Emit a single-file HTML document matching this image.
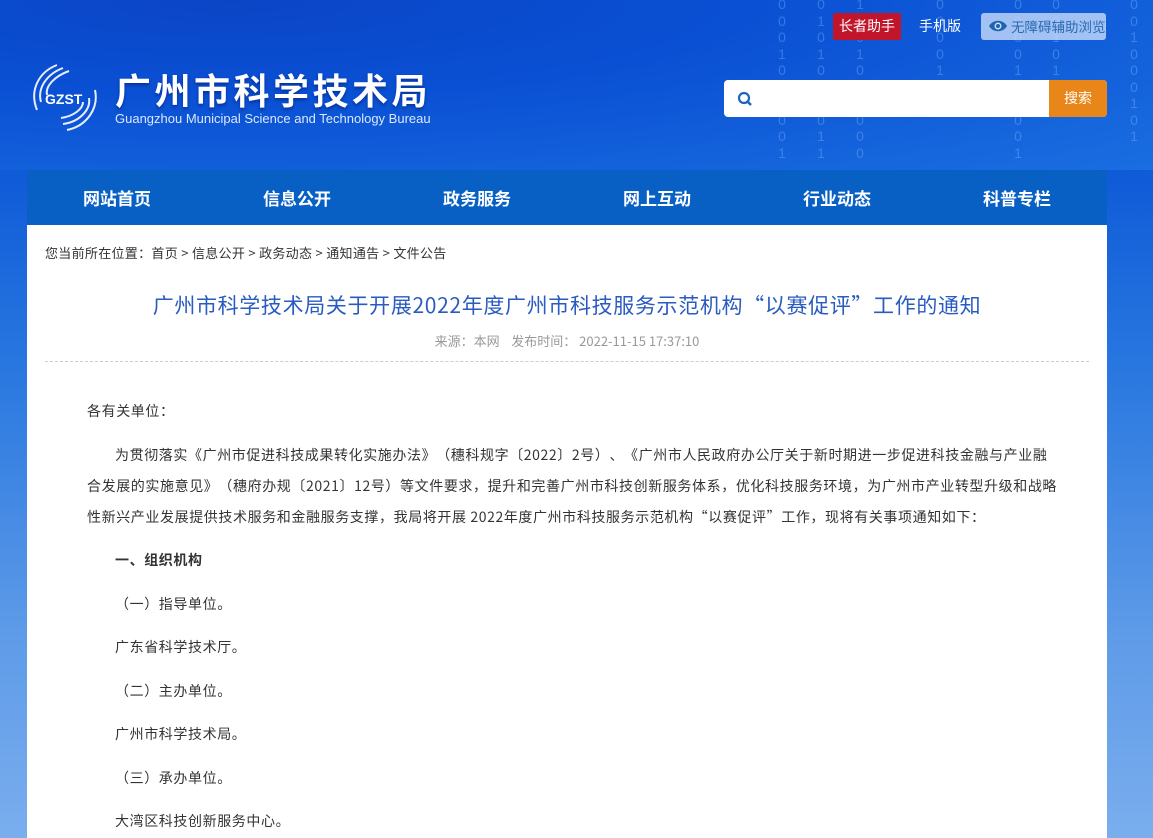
<!DOCTYPE html>
<html><head><meta charset="utf-8"><style>
*{margin:0;padding:0;box-sizing:border-box}
html{height:838px;overflow:hidden}
body{width:1153px;height:838px;overflow:hidden;font-family:"Noto Sans CJK SC","Liberation Sans",sans-serif;background:linear-gradient(180deg,#0a3fc0 0%,#0e5ad8 20%,#2a78e0 45%,#5d9ae8 75%,#7aaeee 100%);position:relative;text-spacing-trim:space-all}
.hdr{position:absolute;left:0;top:0;width:1153px;height:170px;background:radial-gradient(ellipse at 20% 0%,#0b45c6 0%,#0a50d4 40%,#1a6ee0 100%)}
.bin{position:absolute;color:rgba(140,190,255,.35);font-family:"Liberation Sans",sans-serif;font-size:14px;line-height:16.5px;width:10px;text-align:center}
.logo{position:absolute;left:27px;top:62px}
.t1{position:absolute;left:115px;top:70px;color:#fff;font-size:36px;line-height:38px;font-weight:bold;letter-spacing:3.5px;text-shadow:0 2px 3px rgba(0,0,60,.4)}
.t2{position:absolute;left:115px;top:111px;color:#dbe8ff;font-size:13px;line-height:16px;font-family:"Liberation Sans",sans-serif}
.top a{position:absolute;top:13px;height:27px;line-height:27px;font-size:14px;color:#fff}
.srch{position:absolute;left:724px;top:80px;width:383px;height:37px;background:#fff;border-radius:4px}
.sbtn{position:absolute;right:0;top:0;width:58px;height:37px;background:#e8861a;color:#fff;font-size:14px;text-align:center;line-height:37px;border-radius:0 4px 4px 0}
.nav{position:absolute;left:27px;top:170px;width:1080px;height:55px;background:#0860c4;display:flex}
.nav div{flex:1;text-align:center;color:#fff;font-size:17px;font-weight:bold;line-height:55px}
.main{position:absolute;left:27px;top:225px;width:1080px;height:613px;background:#fff;overflow:hidden}
.crumb{position:absolute;left:18px;top:18px;font-size:13px;color:#333;line-height:20px;letter-spacing:.3px}
.title{position:absolute;left:0;width:1080px;top:65px;text-align:center;font-size:21px;color:#2a5bc0;line-height:30px;letter-spacing:.65px}
.meta{position:absolute;left:0;width:1080px;top:107px;text-align:center;font-size:13px;color:#999;line-height:18px}
.line{position:absolute;left:18px;width:1044px;top:136px;border-top:1px dashed #ccc}
.body{position:absolute;left:60px;top:171px;width:1000px;font-size:14px;color:#333;line-height:31px;letter-spacing:.6px;white-space:nowrap}
.body p{margin-bottom:12.5px}
.ind{text-indent:28px}
</style></head><body>
<div class="hdr"></div>
<div class="bin" style="left:777px;top:-4px">0<br>0<br>0<br>1<br>0<br>1<br>0<br>0<br>0<br>1</div>
<div class="bin" style="left:816px;top:-4px">0<br>1<br>0<br>1<br>0<br>0<br>0<br>0<br>1<br>1</div>
<div class="bin" style="left:855px;top:-4px">1<br>0<br>0<br>1<br>0<br>0<br>1<br>0<br>0<br>0</div>
<div class="bin" style="left:935px;top:-4px">0<br>0<br>0<br>0<br>1<br>0</div>
<div class="bin" style="left:1013px;top:-4px">0<br>0<br>0<br>0<br>1<br>0<br>0<br>0<br>0<br>1</div>
<div class="bin" style="left:1051px;top:-4px">0<br>0<br>1<br>0<br>1<br>0</div>
<div class="bin" style="left:1129px;top:-4px">0<br>0<br>1<br>0<br>0<br>0<br>1<br>0<br>1</div>
<svg class="logo" width="74" height="72" viewBox="0 0 74 72">
<g fill="none" stroke="#fff" stroke-width="2" opacity=".9">
<path d="M30 3 C12 10 2 28 10 48"/><path d="M36 6 C20 12 10 26 14 40"/><path d="M42 9 C28 14 18 24 20 33"/>
<path d="M40 68 C60 64 72 46 68 28"/><path d="M36 62 C52 60 64 48 62 36"/><path d="M34 56 C48 54 56 46 56 40"/></g>
<text x="18" y="42" fill="#fff" font-size="14" font-weight="bold" font-family="Liberation Sans">GZST</text></svg>
<div class="t1">广州市科学技术局</div>
<div class="t2">Guangzhou Municipal Science and Technology Bureau</div>
<div class="top"><a style="left:833px;width:68px;background:#c0152a;text-align:center;border-radius:2px">长者助手</a>
<a style="left:919px">手机版</a>
<a style="left:981px;width:125px;background:rgba(200,220,250,.8);color:#2a6ab0;border-radius:3px;padding-left:30px;font-size:13.5px">无障碍辅助浏览</a>
<svg style="position:absolute;left:988px;top:19px" width="20" height="14" viewBox="0 0 20 14"><path d="M1 7C5 0 15 0 19 7C15 14 5 14 1 7Z" fill="#1e64b0"/><circle cx="10" cy="7" r="3.5" fill="#c8dcf8"/><circle cx="10" cy="7" r="2" fill="#1e64b0"/></svg></div>
<div class="srch"><svg style="position:absolute;left:13px;top:11px" width="16" height="16" viewBox="0 0 16 16"><circle cx="7" cy="7" r="5" fill="none" stroke="#1e64c0" stroke-width="2.2"/><path d="M10.5 10.5L14 14" stroke="#1e64c0" stroke-width="2.5"/></svg><div class="sbtn">搜索</div></div>
<div class="nav"><div>网站首页</div><div>信息公开</div><div>政务服务</div><div>网上互动</div><div>行业动态</div><div>科普专栏</div></div>
<div class="main">
<div class="crumb">您当前所在位置：首页 &gt; 信息公开 &gt; 政务动态 &gt; 通知通告 &gt; 文件公告</div>
<div class="title">广州市科学技术局关于开展2022年度广州市科技服务示范机构“以赛促评”工作的通知</div>
<div class="meta">来源：本网&nbsp;&nbsp;&nbsp;&nbsp;发布时间： 2022-11-15 17:37:10</div>
<div class="line"></div>
<div class="body">
<p>各有关单位：</p>
<p class="ind">为贯彻落实《广州市促进科技成果转化实施办法》（穗科规字〔2022〕2号）、《广州市人民政府办公厅关于新时期进一步促进科技金融与产业融<br>合发展的实施意见》（穗府办规〔2021〕12号）等文件要求，提升和完善广州市科技创新服务体系，优化科技服务环境，为广州市产业转型升级和战略<br>性新兴产业发展提供技术服务和金融服务支撑，我局将开展 2022年度广州市科技服务示范机构“以赛促评”工作，现将有关事项通知如下：</p>
<p class="ind"><b>一、组织机构</b></p>
<p class="ind">（一）指导单位。</p>
<p class="ind">广东省科学技术厅。</p>
<p class="ind">（二）主办单位。</p>
<p class="ind">广州市科学技术局。</p>
<p class="ind">（三）承办单位。</p>
<p class="ind">大湾区科技创新服务中心。</p>
</div></div>
</body></html>
